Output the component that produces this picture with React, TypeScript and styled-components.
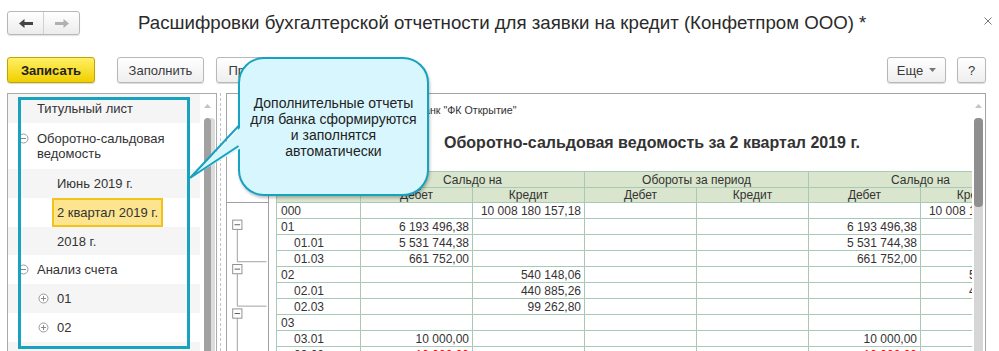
import React from 'react';
import styled, { createGlobalStyle } from 'styled-components';

const TEAL = '#17a2bf';
const GRID = '#a9c8b8';
const HEAD = '#d9e5cc';

const Global = createGlobalStyle`
  html, body { margin: 0; padding: 0; background: #fff; }
  body { font-family: Arial, "Liberation Sans", sans-serif; color: #333; }
  * { box-sizing: border-box; }
`;

const Page = styled.div`
  position: relative;
  width: 999px;
  height: 351px;
  overflow: hidden;
  background: #fff;
`;

const TitleBar = styled.div`
  display: flex;
  align-items: center;
  height: 46px;
  padding-left: 7px;
`;

const NavGroup = styled.div`
  display: flex;
  height: 24px;
  width: 73px;
  border: 1px solid #b8b8b8;
  border-radius: 3px;
  background: linear-gradient(#ffffff, #ececec);
  box-shadow: 0 1px 1px rgba(0, 0, 0, 0.12);
`;

const NavButton = styled.div<{ $sep?: boolean }>`
  flex: 1;
  display: flex;
  align-items: center;
  justify-content: center;
  border-left: ${p => (p.$sep ? '1px solid #d0d0d0' : 'none')};
`;

const Title = styled.div`
  margin-left: 58px;
  font-size: 18.67px;
  color: #2a2a2a;
  white-space: nowrap;
`;

const Close = styled.div`
  margin-left: auto;
  margin-right: 7px;
  margin-top: -4px;
  display: flex;
`;

const Toolbar = styled.div`
  display: flex;
  align-items: flex-start;
  height: 47px;
  padding: 11px 13px 0 7px;
`;

const Button = styled.div<{ $primary?: boolean; $w: number; $gap?: number }>`
  display: flex;
  align-items: center;
  justify-content: center;
  gap: 6px;
  width: ${p => p.$w}px;
  height: 26px;
  margin-left: ${p => p.$gap ?? 0}px;
  border: 1px solid ${p => (p.$primary ? '#c2a400' : '#b8b8b8')};
  border-radius: 3px;
  background: ${p => (p.$primary ? 'linear-gradient(#fff064, #f0cf00)' : 'linear-gradient(#ffffff, #eeeeee)')};
  box-shadow: 0 1px 1px rgba(0, 0, 0, 0.15);
  font-size: 13px;
  font-weight: ${p => (p.$primary ? 'bold' : 'normal')};
  color: ${p => (p.$primary ? '#222' : '#3a3a3a')};
  white-space: nowrap;
  overflow: hidden;
  flex: none;
`;

const Spacer = styled.div`
  flex: 1;
`;

const Main = styled.div`
  display: flex;
  height: 258px;
  padding-left: 7px;
`;

const LeftPanel = styled.div`
  display: flex;
  width: 210px;
  border: 1px solid #ababab;
  border-bottom: none;
  flex: none;
`;

const TreeList = styled.div`
  width: 192px;
  display: flex;
  flex-direction: column;
`;

const TreeRow = styled.div<{ $shade?: boolean; $h: number; $level: number; $top?: boolean }>`
  display: flex;
  align-items: ${p => (p.$top ? 'flex-start' : 'center')};
  height: ${p => p.$h}px;
  flex: none;
  padding-left: ${p => 10 + p.$level * 20}px;
  padding-top: ${p => (p.$top ? 8 : 0)}px;
  background: ${p => (p.$shade ? '#f5f5f5' : '#fff')};
  font-size: 13px;
  line-height: 15px;
  color: #333;
`;

const Filler = styled.div`
  flex: 1;
  background: #f5f5f5;
`;

const IconSlot = styled.span`
  width: 19px;
  height: 15px;
  flex: none;
  display: flex;
  align-items: center;
`;

const Selected = styled.span`
  display: flex;
  align-items: center;
  align-self: stretch;
  margin-left: -5px;
  padding: 0 3px;
  border: 2px solid #f3c31b;
  background: #fde48f;
`;

const VScroll = styled.div<{ $w: number }>`
  width: ${p => p.$w}px;
  flex: none;
  display: flex;
  flex-direction: column;
  align-items: center;
  background: #fff;
`;

const ScrollArrow = styled.div`
  height: 24px;
  flex: none;
  display: flex;
  align-items: center;
  justify-content: center;
`;

const LeftThumb = styled.div`
  width: 7px;
  flex: 1;
  background: #a1a1a1;
  border-radius: 4px 4px 0 0;
  box-shadow: 4px 0 0 #dcdcdc;
`;

const Track = styled.div`
  width: 9px;
  flex: 1;
  background: #d6d6d6;
  border-radius: 4px 4px 0 0;
`;

const RightThumb = styled.div`
  height: 89px;
  background: #8f8f8f;
  border-radius: 4px;
`;

const Splitter = styled.div`
  width: 9px;
  flex: none;
  padding-left: 3px;
`;

const SplitLine = styled.div`
  height: 100%;
  border-left: 1px dashed #c4c4c4;
`;

const ReportPanel = styled.div`
  display: flex;
  width: 760px;
  flex: none;
  border: 1px solid #a3a3a3;
  border-bottom: none;
`;

const ReportBody = styled.div`
  display: flex;
  width: 745px;
  flex: none;
  overflow: hidden;
`;

const Gutter = styled.div`
  width: 42px;
  flex: none;
  border-right: 1px solid #a0a0a0;
  display: flex;
  flex-direction: column;
`;

const GutterHead = styled.div`
  height: 109px;
  flex: none;
  border-bottom: 1px solid #a0a0a0;
`;

const ReportMain = styled.div`
  flex: 1;
  min-width: 0;
  padding-left: 7px;
  overflow: hidden;
`;

const BankLine = styled.div`
  margin-top: 9px;
  height: 14px;
  line-height: 14px;
  padding-left: 141px;
  font-size: 10.67px;
  color: #333;
  white-space: nowrap;
`;

const ReportTitle = styled.div`
  margin-top: 16px;
  height: 20px;
  line-height: 20px;
  padding-left: 168px;
  font-size: 16px;
  font-weight: bold;
  color: #333;
  white-space: nowrap;
`;

const Grid = styled.div`
  margin-top: 18px;
  display: grid;
  grid-template-columns: 84px repeat(6, 112px);
  grid-template-rows: 16px 15px repeat(10, 16px);
  width: max-content;
  border-top: 1px solid ${GRID};
  border-left: 1px solid ${GRID};
`;

const HeadCell = styled.div<{ $col?: string; $row?: string }>`
  grid-column: ${p => p.$col ?? 'auto'};
  grid-row: ${p => p.$row ?? 'auto'};
  display: flex;
  align-items: center;
  justify-content: center;
  background: ${HEAD};
  border-right: 1px solid ${GRID};
  border-bottom: 1px solid ${GRID};
  font-size: 12px;
  color: #333;
  white-space: nowrap;
  overflow: hidden;
`;

const Cell = styled.div<{ $right?: boolean; $sub?: boolean; $red?: boolean }>`
  display: flex;
  align-items: center;
  justify-content: ${p => (p.$right ? 'flex-end' : 'flex-start')};
  padding: 0 3px 0 ${p => (p.$sub ? 17 : 4)}px;
  border-right: 1px solid ${GRID};
  border-bottom: 1px solid ${GRID};
  font-size: 12px;
  color: ${p => (p.$red ? '#ff0000' : '#333')};
  white-space: nowrap;
  overflow: hidden;
`;

const Highlight = styled.div`
  position: absolute;
  left: 18px;
  top: 97px;
  width: 172px;
  height: 252px;
  border: 3px solid ${TEAL};
  pointer-events: none;
`;

const Callout = styled.div`
  position: absolute;
  left: 238px;
  top: 57px;
  width: 191px;
  height: 139px;
  border: 2px solid ${TEAL};
  border-radius: 26px;
  background: #d8f6fd;
  box-shadow: 1px 2px 3px rgba(0, 0, 0, 0.25);
  display: flex;
  align-items: center;
  justify-content: center;
  text-align: center;
  font-size: 14px;
  line-height: 16px;
  color: #222;
  padding: 0 6px 0;
`;

const Tail = styled.svg`
  position: absolute;
  left: 180px;
  top: 110px;
`;

type Row = { acc: string; sub?: boolean; red?: boolean; v: string[] };

const rows: Row[] = [
  { acc: '000', v: ['', '10 008 180 157,18', '', '', '', '10 008 180 157,18'] },
  { acc: '01', v: ['6 193 496,38', '', '', '', '6 193 496,38', ''] },
  { acc: '01.01', sub: true, v: ['5 531 744,38', '', '', '', '5 531 744,38', ''] },
  { acc: '01.03', sub: true, v: ['661 752,00', '', '', '', '661 752,00', ''] },
  { acc: '02', v: ['', '540 148,06', '', '', '', '540 148,06'] },
  { acc: '02.01', sub: true, v: ['', '440 885,26', '', '', '', '440 885,26'] },
  { acc: '02.03', sub: true, v: ['', '99 262,80', '', '', '', '99 262,80'] },
  { acc: '03', v: ['', '', '', '', '', ''] },
  { acc: '03.01', sub: true, v: ['10 000,00', '', '', '', '10 000,00', ''] },
  { acc: '03.02', sub: true, red: true, v: ['10 000,00', '', '', '', '10 000,00', ''] },
];

const Toggle = ({ open }: { open: boolean }) => (
  <svg width="11" height="11" viewBox="0 0 11 11">
    <circle cx="5.5" cy="5.5" r="4.5" fill="#fff" stroke="#9a9a9a" />
    <line x1="3" y1="5.5" x2="8" y2="5.5" stroke="#888" />
    {!open && <line x1="5.5" y1="3" x2="5.5" y2="8" stroke="#888" />}
  </svg>
);

const UpArrow = ({ color }: { color: string }) => (
  <svg width="7" height="4" viewBox="0 0 7 4">
    <path d="M0 4 L3.5 0 L7 4 Z" fill={color} />
  </svg>
);

const Arrow = ({ dir, color }: { dir: 'l' | 'r'; color: string }) => (
  <svg width="14" height="9" viewBox="0 0 14 9" style={dir === 'r' ? { transform: 'scaleX(-1)' } : undefined}>
    <path d="M0 4.5 L5.5 0 V3 H14 V6 H5.5 V9 Z" fill={color} />
  </svg>
);

const GroupBox = ({ y }: { y: number }) => (
  <g>
    <rect x="4.5" y={y} width="10" height="10" fill="#fff" stroke="#8a8a8a" />
    <line x1="6.5" y1={y + 5} x2="12.5" y2={y + 5} stroke="#555" />
  </g>
);

const TreeLines = () => (
  <svg width="41" height="160" viewBox="0 0 41 160">
    <g stroke="#9a9a9a" fill="none">
      <path d="M9.5 28.5 V63.5 H41" />
      <path d="M9.5 76.5 V111.5 H41" />
      <path d="M9.5 124.5 V160" />
    </g>
    <GroupBox y={18.5} />
    <GroupBox y={66.5} />
    <GroupBox y={114.5} />
  </svg>
);

export default function App() {
  return (
    <Page>
      <Global />
      <TitleBar>
        <NavGroup>
          <NavButton>
            <Arrow dir="l" color="#444" />
          </NavButton>
          <NavButton $sep>
            <Arrow dir="r" color="#b0b0b0" />
          </NavButton>
        </NavGroup>
        <Title>Расшифровки бухгалтерской отчетности для заявки на кредит (Конфетпром ООО) *</Title>
        <Close>
          <svg width="8" height="8" viewBox="0 0 8 8">
            <path d="M0.5 0.5 L7.5 7.5 M7.5 0.5 L0.5 7.5" stroke="#777" strokeWidth="1" />
          </svg>
        </Close>
      </TitleBar>

      <Toolbar>
        <Button $primary $w={88}>Записать</Button>
        <Button $w={87} $gap={22}>Заполнить</Button>
        <Button $w={90} $gap={12}>Проверить</Button>
        <Spacer />
        <Button $w={59}>
          Еще
          <svg width="7" height="4" viewBox="0 0 7 4">
            <path d="M0 0 L7 0 L3.5 4 Z" fill="#777" />
          </svg>
        </Button>
        <Button $w={29} $gap={11}>?</Button>
      </Toolbar>

      <Main>
        <LeftPanel>
          <TreeList>
            <TreeRow $shade $h={29} $level={0}>
              <IconSlot />
              Титульный лист
            </TreeRow>
            <TreeRow $h={46} $level={0} $top>
              <IconSlot>
                <Toggle open />
              </IconSlot>
              Оборотно-сальдовая ведомость
            </TreeRow>
            <TreeRow $shade $h={29} $level={1}>
              <IconSlot />
              Июнь 2019 г.
            </TreeRow>
            <TreeRow $h={29} $level={1}>
              <IconSlot />
              <Selected>2 квартал 2019 г.</Selected>
            </TreeRow>
            <TreeRow $shade $h={28} $level={1}>
              <IconSlot />
              2018 г.
            </TreeRow>
            <TreeRow $h={29} $level={0}>
              <IconSlot>
                <Toggle open />
              </IconSlot>
              Анализ счета
            </TreeRow>
            <TreeRow $shade $h={29} $level={1}>
              <IconSlot>
                <Toggle open={false} />
              </IconSlot>
              01
            </TreeRow>
            <TreeRow $h={29} $level={1}>
              <IconSlot>
                <Toggle open={false} />
              </IconSlot>
              02
            </TreeRow>
            <Filler />
          </TreeList>
          <VScroll $w={15}>
            <ScrollArrow>
              <UpArrow color="#c4c4c4" />
            </ScrollArrow>
            <LeftThumb />
          </VScroll>
        </LeftPanel>

        <Splitter>
          <SplitLine />
        </Splitter>

        <ReportPanel>
          <ReportBody>
            <Gutter>
              <GutterHead />
              <TreeLines />
            </Gutter>
            <ReportMain>
              <BankLine>Банк "ФК Открытие"</BankLine>
              <ReportTitle>Оборотно-сальдовая ведомость за 2 квартал 2019 г.</ReportTitle>
              <Grid>
                <HeadCell $row="1 / span 2">Счет</HeadCell>
                <HeadCell $col="span 2">Сальдо на</HeadCell>
                <HeadCell $col="span 2">Обороты за период</HeadCell>
                <HeadCell $col="span 2">Сальдо на</HeadCell>
                <HeadCell>Дебет</HeadCell>
                <HeadCell>Кредит</HeadCell>
                <HeadCell>Дебет</HeadCell>
                <HeadCell>Кредит</HeadCell>
                <HeadCell>Дебет</HeadCell>
                <HeadCell>Кредит</HeadCell>
                {rows.map(r => (
                  <React.Fragment key={r.acc}>
                    <Cell $sub={r.sub}>{r.acc}</Cell>
                    {r.v.map((val, i) => (
                      <Cell key={i} $right $red={r.red}>
                        {val}
                      </Cell>
                    ))}
                  </React.Fragment>
                ))}
              </Grid>
            </ReportMain>
          </ReportBody>
          <VScroll $w={13}>
            <ScrollArrow>
              <UpArrow color="#c4c4c4" />
            </ScrollArrow>
            <Track>
              <RightThumb />
            </Track>
          </VScroll>
        </ReportPanel>
      </Main>

      <Highlight />
      <Callout>
        <span>
          Дополнительные отчеты
          <br />
          для банка сформируются
          <br />
          и заполнятся
          <br />
          автоматически
        </span>
      </Callout>
      <Tail width="70" height="80" viewBox="0 0 70 80">
        <polygon points="63,15 10,68 63,37" fill="#d8f6fd" />
        <path d="M58.5 16 L10 68 L58.5 36" fill="none" stroke={TEAL} strokeWidth="2" strokeLinejoin="miter" />
      </Tail>
    </Page>
  );
}
